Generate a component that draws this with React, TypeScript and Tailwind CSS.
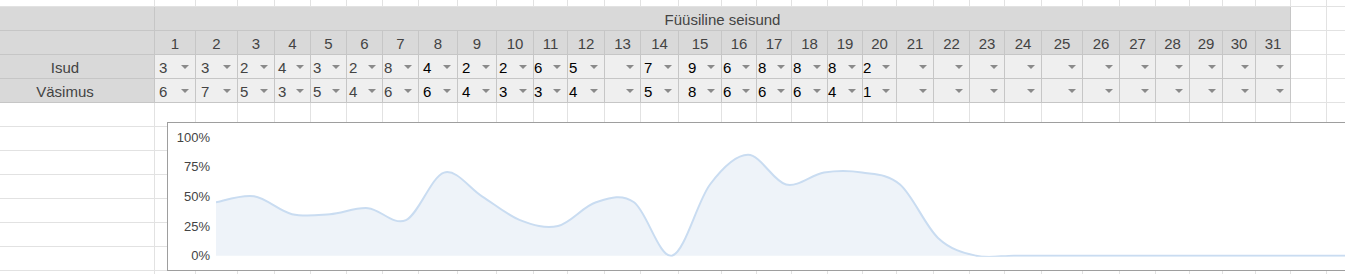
import React from "react";

const isud = ["3", "3", "2", "4", "3", "2", "8", "4", "2", "2", "6", "5", "", "7", "9", "6", "8", "8", "8", "2"];
const vasimus = ["6", "7", "5", "3", "5", "4", "6", "6", "4", "3", "3", "4", "", "5", "8", "6", "6", "6", "4", "1"];

const days = Array.from({ length: 31 }, (_, i) => i + 1);

// left offset of the value inside each day column
const valuePad = [
  "pl-[4px]", "pl-[5px]", "pl-[2px]", "pl-[3px]", "pl-[2px]", "pl-[2px]", "pl-[1px]", "pl-[4px]",
  "pl-[4px]", "pl-[2px]", "pl-0", "pl-[1px]", "pl-[2px]", "pl-[3px]", "pl-[9px]", "pl-[1px]",
  "pl-[1px]", "pl-[1px]", "pl-0", "pl-0", "pl-[2px]", "pl-[2px]", "pl-[2px]", "pl-[2px]",
  "pl-[2px]", "pl-[2px]", "pl-[2px]", "pl-[2px]", "pl-[2px]", "pl-[2px]", "pl-[2px]",
];

const whiteCell = "border-r border-b border-[#e2e2e2]";
const greyCell = "border-r border-b border-[#c6c6c6] bg-[#d9d9d9] text-[#434343] leading-[22px] pt-[2px]";
const dataCell = "border-r border-b border-[#c6c6c6] bg-[#efefef] flex justify-between";

function WhiteRow({ k }: { k: string }) {
  return (
    <>
      {Array.from({ length: 34 }, (_, i) => (
        <div key={`${k}-${i}`} className={whiteCell} />
      ))}
    </>
  );
}

function Arrow() {
  return (
    <svg width="8" height="4" viewBox="0 0 8 4" className="mt-[10px] mr-[6px] shrink-0">
      <polygon points="0,0 8,0 4,4" fill="#8a8a8a" />
    </svg>
  );
}

function DataRow({ label, values }: { label: string; values: string[] }) {
  return (
    <>
      <div className={`${greyCell} text-center pr-[24px]`}>{label}</div>
      {days.map((d, i) => (
        <div key={`${label}-${d}`} className={dataCell}>
          <span
            className={`${valuePad[i]} leading-[22px] pt-[2px] ${i < 7 ? "text-[#434343]" : "text-black"}`}
          >
            {values[i] ?? ""}
          </span>
          <Arrow />
        </div>
      ))}
      <div className={whiteCell} />
      <div className={whiteCell} />
    </>
  );
}

function Chart() {
  const values = days.map((_, i) => (Number(isud[i] || 0) + Number(vasimus[i] || 0)) * 5);
  const base = 132.7;
  const scale = 1.187;
  const pts = values.map((v, i) => [48 + 38 * i, base - v * scale]);

  let d = `M${pts[0][0]},${pts[0][1]}`;
  for (let i = 0; i < pts.length - 1; i++) {
    const p0 = pts[i - 1] || pts[i];
    const p1 = pts[i];
    const p2 = pts[i + 1];
    const p3 = pts[i + 2] || p2;
    const c1x = p1[0] + (p2[0] - p0[0]) / 6;
    const c1y = p1[1] + (p2[1] - p0[1]) / 6;
    const c2x = p2[0] - (p3[0] - p1[0]) / 6;
    const c2y = p2[1] - (p3[1] - p1[1]) / 6;
    d += ` C${c1x.toFixed(1)},${c1y.toFixed(1)} ${c2x.toFixed(1)},${c2y.toFixed(1)} ${p2[0]},${p2[1].toFixed(1)}`;
  }
  const last = pts[pts.length - 1];
  const area = `${d} L${last[0]},${base} L${pts[0][0]},${base} Z`;

  return (
    <div className="absolute left-[167px] top-[122px] w-[1200px] h-[149px] border border-[#9e9e9e] bg-white">
      <svg width="1198" height="147" className="block">
        <defs>
          <clipPath id="plot">
            <rect x="48" y="0" width="1150" height={base + 1} />
          </clipPath>
        </defs>
        {[100, 75, 50, 25, 0].map((v) => (
          <text
            key={v}
            x="42"
            y={base - v * scale + 4.7}
            textAnchor="end"
            fontSize="13"
            fill="#444"
            fontFamily="'Liberation Sans', Arial, sans-serif"
          >
            {v}%
          </text>
        ))}
        <g clipPath="url(#plot)">
          <path d={area} fill="#eef3f9" />
          <path d={d} fill="none" stroke="#c9dcf1" strokeWidth="2" />
        </g>
      </svg>
    </div>
  );
}

export default function App() {
  return (
    <div className="relative w-[1345px] h-[274px] overflow-hidden bg-white font-['Liberation_Sans',Arial,sans-serif] text-[15px]">
      <div className="grid w-max grid-cols-[155px_41px_42px_37px_36px_36px_36px_36px_39px_39px_37px_34px_37px_36px_38px_43px_35px_35px_36px_35px_34px_37px_36px_35px_37px_41px_37px_36px_34px_33px_33px_35px_36px_36px] grid-rows-[7px_repeat(12,24px)]">
        <WhiteRow k="r0" />

        {/* title row */}
        <div className={greyCell} />
        <div className={`${greyCell} col-span-31 text-center`}>Füüsiline seisund</div>
        <div className={whiteCell} />
        <div className={whiteCell} />

        {/* day numbers */}
        <div className={greyCell} />
        {days.map((d) => (
          <div key={`day-${d}`} className={`${greyCell} text-center`}>
            {d}
          </div>
        ))}
        <div className={whiteCell} />
        <div className={whiteCell} />

        <DataRow label="Isud" values={isud} />
        <DataRow label="Väsimus" values={vasimus} />

        {["r5", "r6", "r7", "r8", "r9", "r10", "r11", "r12"].map((k) => (
          <WhiteRow key={k} k={k} />
        ))}
      </div>
      <Chart />
    </div>
  );
}
